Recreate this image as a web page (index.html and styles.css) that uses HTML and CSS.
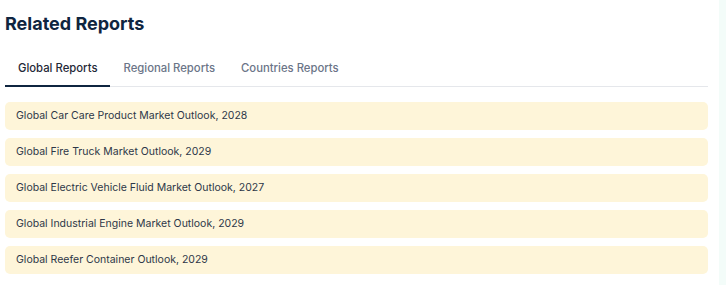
FILE: index.html
```html
<!DOCTYPE html>
<html lang="en">
<head>
    <meta charset="UTF-8">
    <meta name="viewport" content="width=device-width, initial-scale=1.0">
    <title>Related Reports</title>
    <link rel="stylesheet" href="styles.css">
</head>
<body>
    <div class="page">
        <section class="related">
            <h2>Related Reports</h2>

            <nav class="tabs">
                <a class="tab active" href="#">Global Reports</a>
                <a class="tab" href="#">Regional Reports</a>
                <a class="tab" href="#">Countries Reports</a>
            </nav>

            <ul class="report-list">
                <li><a href="#">Global Car Care Product Market Outlook, 2028</a></li>
                <li><a href="#">Global Fire Truck Market Outlook, 2029</a></li>
                <li><a href="#">Global Electric Vehicle Fluid Market Outlook, 2027</a></li>
                <li><a href="#">Global Industrial Engine Market Outlook, 2029</a></li>
                <li><a href="#">Global Reefer Container Outlook, 2029</a></li>
            </ul>
        </section>
        <aside class="side"></aside>
    </div>
</body>
</html>
```

FILE: styles.css
```css
body {
    font-family: Inter, "Noto Sans", sans-serif;
    margin: 0;
    padding: 0;
    background-color: #fff;
}
.page {
    display: flex;
    height: 285px;
}
.related {
    width: 703px;
    padding-left: 5px;
    padding-right: 11px;
}
.side {
    flex: 1;
    background-color: #f3fcf9;
}
.related h2 {
    margin: 12px 0 0;
    font-size: 18px;
    font-weight: 700;
    line-height: 24px;
    color: #0f2540;
}
.tabs {
    display: flex;
    margin-top: 19px;
    border-bottom: 1px solid #e5e7eb;
}
.tab {
    display: block;
    padding: 0 13px;
    height: 30px;
    line-height: 27px;
    font-size: 11.3px;
    font-weight: 500;
    color: #6b7588;
    text-decoration: none;
    margin-bottom: -1px;
    border-bottom: 2px solid transparent;
}
.tab.active {
    color: #1f2937;
    border-bottom-color: #0f2540;
}
.report-list {
    list-style: none;
    margin: 15px 0 0;
    padding: 0;
    display: flex;
    flex-direction: column;
    gap: 8px;
}
.report-list li a {
    display: block;
    height: 28px;
    line-height: 28px;
    padding-left: 11px;
    background-color: #fef5d9;
    border-radius: 5px;
    font-size: 10.5px;
    color: #2d3748;
    text-decoration: none;
}
```
